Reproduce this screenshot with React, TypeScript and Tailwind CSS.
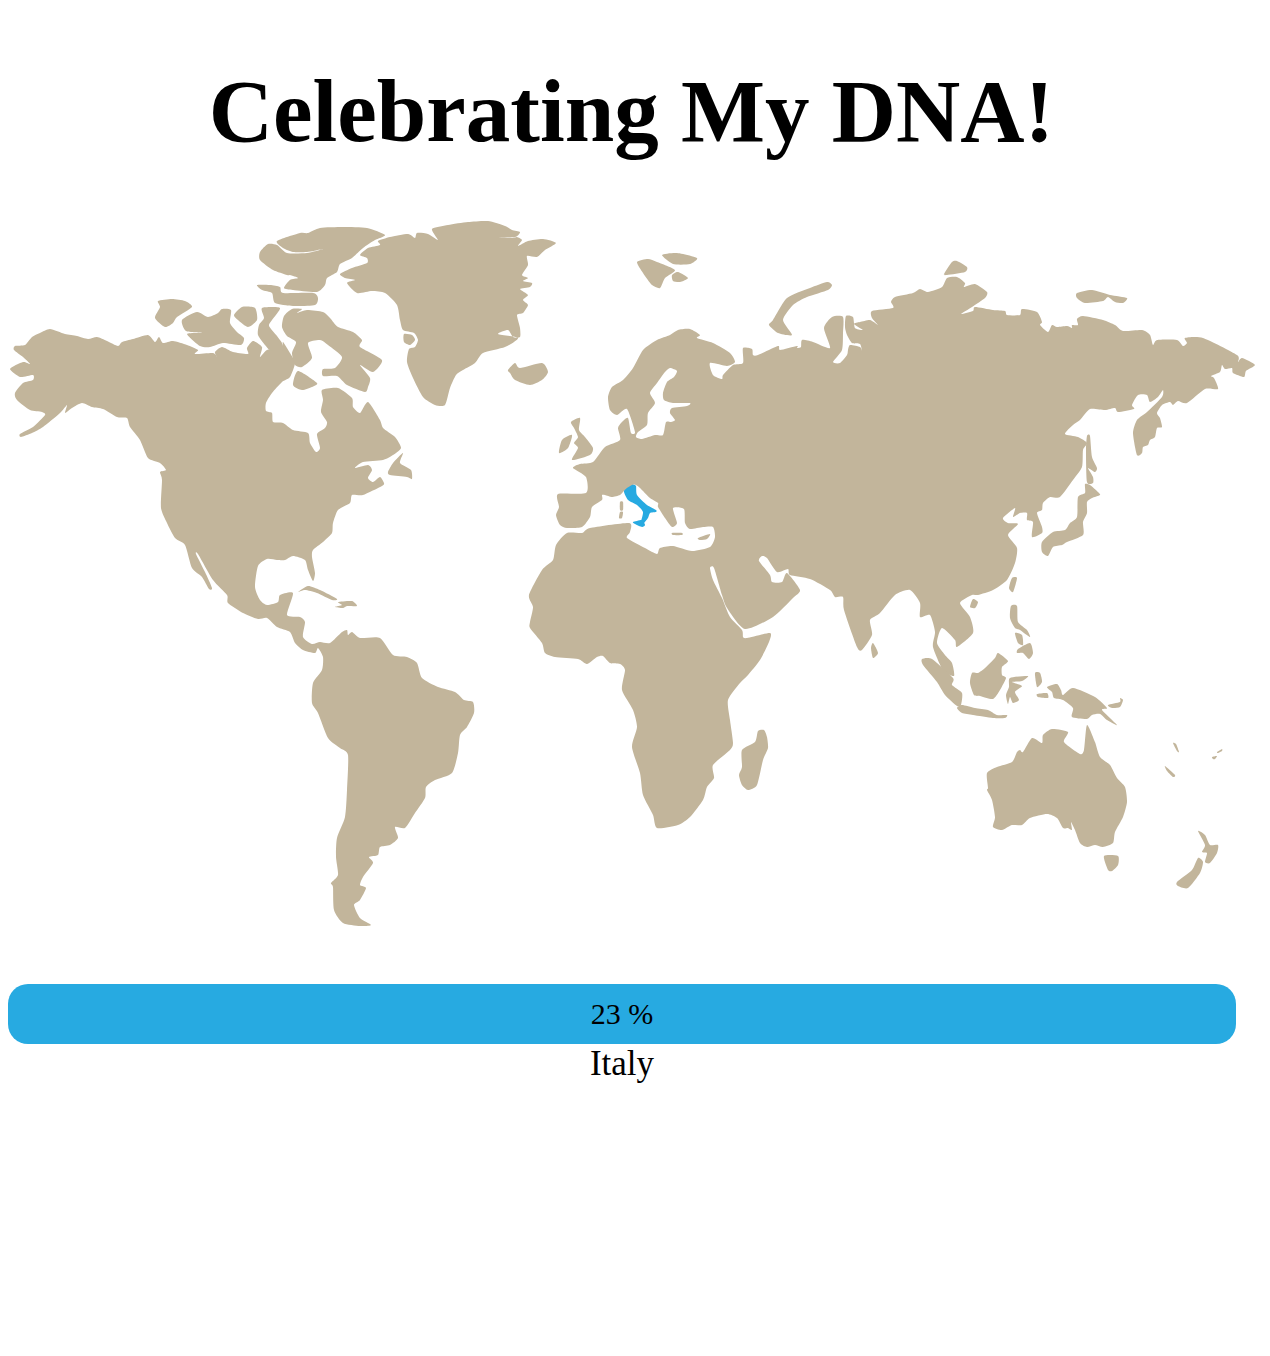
const TAN = '#c2b59b';
const BLUE = '#27aae1';

// Outlines are traced in page coordinates as M/L lists; the svg's viewBox starts at y=195.
const continents = [
  // North + South America
  'M15 346L25 345L32 337L40 333L50 329L65 334L77 336L88 339L97 337L107 341L118 346L122 342L133 339L148 335L155 342L159 337L163 343L173 341L187 345L198 350L195 354L213 353L217 357L215 352L222 347L233 352L248 354L247 348L253 341L262 347L260 357L267 350L282 347L283 342L290 353L295 363L290 377L282 382L272 393L266 403L266 411L272 413L273 422L283 423L293 430L308 433L310 443L316 452L320 448L317 434L325 428L327 422L321 412L323 400L322 390L338 388L352 398L353 407L360 413L368 402L380 420L383 428L395 437L401 448L393 455L383 460L363 462L355 468L368 465L372 470L368 478L373 482L380 477L384 483L382 486L363 495L352 495L350 503L338 510L333 523L332 533L323 542L313 550L312 557L315 573L313 581L308 570L305 560L293 556L285 560L277 560L267 559L258 566L255 587L260 600L267 605L278 602L280 595L293 593L287 615L300 617L305 622L303 637L312 644L320 642L330 643L342 632L347 630L348 635L352 632L360 638L380 638L393 655L407 657L417 663L422 678L438 687L455 692L464 700L473 702L474 713L467 727L460 735L458 753L452 773L435 780L426 787L425 798L415 813L405 828L395 827L398 838L390 845L380 847L378 855L369 857L373 863L363 877L360 885L366 888L360 900L354 905L360 918L371 925L360 926L343 923L334 910L333 887L331 883L338 875L336 857L337 838L345 817L347 790L348 755L340 748L328 738L318 713L312 703L313 683L322 670L323 657L318 648L315 653L303 650L295 643L290 632L277 627L267 618L258 619L243 613L228 603L227 595L213 580L198 554L196 554L205 572L212 588L209 589L202 577L192 568L185 545L175 538L167 523L161 508L162 480L160 472L166 470L160 463L148 458L140 440L130 427L127 418L117 417L103 409L92 407L82 403L72 408L65 413L67 405L60 413L43 427L32 433L21 437L20 434L33 427L45 415L42 412L30 410L17 400L15 393L23 383L33 380L33 375L20 377L10 369L23 362L30 364L23 357L14 350Z',
  // Eurasia + Africa, with the Baltic cut out as a hole
  'M558 494L586 493L586 477L573 468L580 464L593 462L605 447L620 440L618 428L622 422L628 418L631 433L635 432L627 409L617 415L610 410L608 397L612 387L623 380L633 368L643 350L657 340L670 335L678 330L690 329L700 335L697 338L713 343L730 353L735 362L727 366L710 363L713 375L722 379L723 375L733 365L743 363L743 348L752 349L753 355L758 355L778 346L780 350L797 346L797 348L801 347L802 340L813 342L830 348L824 328L832 317L843 317L843 333L842 350L833 362L840 363L847 355L848 350L850 345L860 347L862 351L860 344L852 343L847 335L845 327L846 316L853 317L855 328L863 330L854 324L860 322L870 320L878 325L872 318L872 311L893 308L891 302L895 297L913 293L920 289L928 292L942 287L947 278L957 277L965 283L964 287L975 284L987 292L985 298L972 307L961 314L973 311L975 307L993 310L1005 311L1007 315L1020 315L1022 309L1037 312L1042 322L1040 325L1048 332L1052 325L1057 327L1067 326L1072 328L1072 325L1078 325L1077 319L1083 316L1103 320L1115 325L1123 331L1142 330L1150 335L1153 345L1157 340L1177 340L1183 346L1187 343L1185 338L1203 338L1237 355L1238 362L1242 358L1255 365L1246 371L1244 377L1233 373L1232 368L1225 369L1222 365L1220 372L1211 376L1214 378L1218 389L1205 389L1187 403L1178 401L1173 405L1170 402L1162 405L1157 413L1160 418L1162 427L1157 428L1155 437L1150 440L1148 445L1143 447L1142 453L1137 455L1133 433L1137 420L1147 412L1162 397L1163 390L1158 397L1150 402L1147 395L1138 395L1132 405L1134 409L1118 412L1115 408L1105 410L1090 409L1080 420L1073 425L1065 434L1078 437L1087 443L1083 450L1082 467L1073 480L1060 497L1050 497L1043 503L1042 510L1037 513L1042 527L1042 533L1032 537L1033 522L1027 520L1027 513L1020 513L1013 517L1015 508L1003 518L1008 523L1018 524L1008 535L1017 548L1015 563L1007 580L993 590L978 595L972 595L960 603L970 617L973 633L957 647L955 640L942 628L937 643L945 655L952 663L954 676L943 670L933 647L935 632L930 615L920 617L920 603L910 590L895 595L880 613L870 620L872 635L862 650L857 647L844 610L843 597L835 597L830 590L810 579L790 575L788 569L777 572L767 558L762 556L759 561L770 575L772 582L782 582L787 573L800 590L793 598L773 617L745 629L727 608L722 595L714 568L710 568L713 580L722 598L730 617L742 630L743 637L747 638L770 633L769 642L760 660L748 675L740 683L728 700L730 720L733 743L730 750L713 765L714 778L707 787L703 800L690 817L678 825L657 828L653 815L643 795L640 773L632 747L637 727L633 710L622 690L625 670L620 664L610 663L603 656L597 657L587 664L578 659L555 657L545 653L542 643L530 628L530 622L533 607L529 595L542 570L553 560L556 545L567 533L582 533L590 528L629 523L630 532L627 538L645 548L657 554L660 548L673 546L692 551L710 547L715 537L713 527L703 527L690 529L685 523L684 509L673 508L677 523L672 527L665 518L658 507L658 503L650 498L640 488L636 485L633 485L624 491L620 495L612 497L605 495L602 495L602 500L592 507L590 517L582 527L567 528L560 525L556 515L559 507Z M670 368L677 371L674 377L667 382L663 393L664 400L673 403L690 403L687 406L672 408L670 413L675 420L671 422L666 422L663 435L655 435L642 439L636 437L638 432L647 425L648 413L655 403L650 393L657 383L665 372Z',
  // Greenland
  'M340 274L352 268L367 263L367 258L360 255L368 248L380 245L378 241L390 237L408 234L415 238L417 233L428 234L438 240L432 229L448 225L468 222L488 221L505 226L512 230L520 232L515 237L492 238L512 238L517 237L522 240L518 246L528 241L543 239L556 243L545 250L537 257L527 256L528 265L522 275L528 278L523 281L532 283L530 287L520 289L528 295L523 300L528 305L523 313L517 315L520 328L520 337L513 337L508 330L498 334L518 338L505 347L483 353L475 363L463 370L456 375L450 388L445 405L435 405L423 397L413 378L407 362L409 349L415 347L418 340L414 333L403 330L400 320L397 305L385 293L372 291L357 293L347 283L355 280L345 278Z',
  // Australia
  'M987 773L997 767L1012 762L1017 752L1020 750L1023 752L1032 738L1042 743L1043 735L1052 729L1068 732L1064 742L1080 754L1084 750L1087 725L1095 742L1100 757L1110 765L1117 778L1125 787L1127 802L1123 817L1115 832L1113 843L1103 847L1095 845L1087 847L1080 843L1075 830L1071 822L1072 830L1068 828L1063 828L1057 818L1047 814L1030 818L1022 825L1012 825L1002 830L993 827L995 817L992 800L987 790L988 788Z',
];

const islands = [
  // Arctic Canada
  'M158 301L172 299L185 301L192 307L177 317L173 323L165 327L155 318L160 307Z',
  'M182 320L197 312L208 317L218 313L222 309L231 310L230 323L237 332L244 338L241 345L223 343L210 347L200 346L187 334L203 333L186 331Z',
  'M234 315L242 307L255 308L257 320L248 327L238 320Z',
  'M262 308L280 308L272 320L269 326L277 336L282 343L283 350L270 350L265 345L258 335L259 325L264 318Z',
  'M297 313L307 310L323 312L330 318L338 327L353 332L362 340L360 347L382 360L373 372L360 365L370 378L368 387L365 392L347 385L337 376L323 376L323 369L335 368L342 357L328 345L320 340L308 343L312 358L302 367L295 365L292 353L296 342L287 336L282 327L284 316L292 309L302 309Z',
  'M298 371L317 383L312 387L302 390L293 385Z',
  'M277 241L300 233L308 233L320 228L343 227L367 228L385 235L375 240L363 248L352 258L340 264L337 272L327 278L325 285L317 292L293 290L284 288L290 280L298 278L290 275L287 275L273 270L260 260L260 252L268 244L277 245L287 253L307 253L323 249L307 252L293 252L283 248Z',
  'M257 285L270 285L280 287L283 293L313 293L318 298L315 305L293 306L275 303L272 293L262 290Z',
  'M403 453L400 463L411 470L412 479L407 477L390 475L388 472L393 463Z',
  'M404 334L412 335L415 340L410 345L404 342Z',
  // Caribbean
  'M298 592L308 586L320 590L337 599L332 600L317 593L305 590Z',
  'M338 602L352 601L357 606L347 606L343 608L335 607L342 605Z',
  // North Atlantic and Arctic Europe
  'M508 370L515 363L520 368L542 363L548 372L542 380L530 385L515 380L510 373Z',
  'M637 262L648 259L657 262L675 270L665 278L660 288L652 285L643 273Z',
  'M662 255L677 253L697 258L690 264L673 264Z',
  'M672 275L678 272L688 278L680 282L673 281Z',
  'M832 285L827 282L810 288L787 298L773 320L769 325L778 333L792 335L783 320L793 305L807 297L828 290Z',
  'M571 422L580 418L579 430L585 437L593 448L590 455L572 460L578 448L574 443L578 437L574 428Z',
  'M562 440L572 435L568 448L559 453Z',
  // Mediterranean
  'M620 502L623 502L623 510L620 510Z',
  'M620 512L623 512L622 518L619 518Z',
  'M672 533L682 533L682 535L673 535Z',
  'M698 538L710 534L707 539L700 540Z',
  'M758 731L764 730L767 737L768 748L763 760L757 785L748 790L742 785L739 775L742 767L742 750L755 742Z',
  // North Pacific
  'M1087 436L1090 436L1092 457L1097 468L1095 472L1088 468L1093 477L1093 483L1087 482L1086 450Z',
  'M1085 484L1090 485L1098 492L1100 495L1092 498L1087 502L1087 513L1083 522L1083 535L1067 542L1062 545L1053 547L1048 556L1042 552L1042 542L1053 532L1065 530L1070 523L1077 517L1078 497L1085 493Z',
  'M1077 293L1092 290L1110 295L1127 298L1123 303L1115 302L1108 297L1103 301L1085 303L1077 298Z',
  'M944 274L952 262L957 261L967 267L965 272L947 275Z',
  // South and South East Asia
  'M873 643L878 653L873 658L871 648Z',
  'M970 607L973 599L978 602L975 608Z',
  'M1012 578L1017 578L1013 592L1009 588Z',
  'M1011 606L1017 606L1018 622L1027 630L1030 637L1020 630L1015 628L1010 618Z',
  'M1015 633L1022 635L1023 645L1018 643Z',
  'M1018 649L1030 643L1033 653L1029 659L1023 653L1017 653Z',
  'M998 653L1008 661L1002 667L1002 675L1006 678L1000 690L993 699L980 696L974 695L970 683L972 673L978 673L985 668L995 658Z',
  'M1010 678L1028 676L1022 681L1012 682L1022 686L1015 692L1019 700L1013 703L1010 697L1008 704L1006 695L1009 687Z',
  'M1035 673L1040 673L1042 682L1037 687Z',
  'M1037 694L1047 693L1048 698L1038 697Z',
  'M1047 687L1057 684L1061 690L1063 695L1073 688L1095 697L1107 708L1102 710L1117 725L1107 720L1100 714L1092 715L1087 719L1072 717L1073 708L1063 700L1054 698L1052 692Z',
  'M1108 705L1120 702L1120 698L1123 700L1120 707L1112 708Z',
  'M922 659L932 659L953 678L952 685L962 693L961 705L957 706L945 695L937 682L923 665Z',
  'M957 708L962 705L975 708L988 710L997 715L1007 715L1005 718L993 718L973 715L962 713Z',
  // Oceania
  'M1104 856L1118 856L1118 865L1112 871L1108 870Z',
  'M1198 831L1205 835L1210 845L1218 845L1217 853L1210 863L1205 862L1207 853L1202 852L1205 845Z',
  'M1198 858L1203 862L1200 873L1188 888L1178 886L1177 882L1192 870Z',
  'M1165 766L1175 775L1173 777L1167 771Z',
  'M1173 743L1176 744L1179 752L1177 751Z',
  'M1212 757L1217 756L1215 759L1213 759Z',
  'M1217 752L1222 749L1222 751L1218 753Z',
];

const italy = [
  'M624 491L632 485L636 486L637 495L647 505L656 510L656 512L650 513L648 518L643 524L641 522L643 512L637 505L628 500Z',
  'M633 522L642 520L645 525L642 527L635 524Z',
];

// Rounds the traced polygons: each corner becomes a Catmull-Rom spline knot.
function smooth(d: string) {
  return d
    .split('M')
    .filter((part) => part.trim())
    .map((part) => {
      const pts = part
        .replace('Z', '')
        .trim()
        .split('L')
        .map((p) => p.trim().split(' ').map(Number));
      const at = (i: number) => pts[(i + pts.length) % pts.length];
      const k = 0.11;
      let out = `M${pts[0][0]} ${pts[0][1]}`;
      pts.forEach((p, i) => {
        const prev = at(i - 1);
        const next = at(i + 1);
        const after = at(i + 2);
        const c1x = p[0] + (next[0] - prev[0]) * k;
        const c1y = p[1] + (next[1] - prev[1]) * k;
        const c2x = next[0] - (after[0] - p[0]) * k;
        const c2y = next[1] - (after[1] - p[1]) * k;
        out += `C${c1x.toFixed(1)} ${c1y.toFixed(1)} ${c2x.toFixed(1)} ${c2y.toFixed(1)} ${next[0]} ${next[1]}`;
      });
      return out + 'Z';
    })
    .join(' ');
}

function WorldMap() {
  return (
    <svg viewBox="0 195 1270 750" className="block w-[1270px] h-[750px]">
      <g fill={TAN} fillRule="evenodd">
        {continents.map((d, i) => <path key={i} d={smooth(d)} />)}
        {islands.map((d, i) => <path key={i} d={smooth(d)} />)}
      </g>
      <g fill={BLUE}>
        {italy.map((d, i) => <path key={i} d={smooth(d)} />)}
      </g>
    </svg>
  );
}

export default function App() {
  return (
    <div className="bg-white min-h-[1356px] font-['Liberation_Serif','Times_New_Roman',serif] text-black">
      <h1 className="w-[1263px] pt-[54px] h-[195px] text-center text-[89px] leading-[114px] font-bold">
        Celebrating My DNA!
      </h1>
      <WorldMap />
      <div className="w-[1228px] ml-2 mt-[39px]">
        <div className="h-[60px] pb-0.5 rounded-[20px] bg-[#27aae1] flex items-center justify-center text-[30px]">
          23 %
        </div>
        <div className="text-center text-[35px] leading-10">Italy</div>
      </div>
    </div>
  );
}
